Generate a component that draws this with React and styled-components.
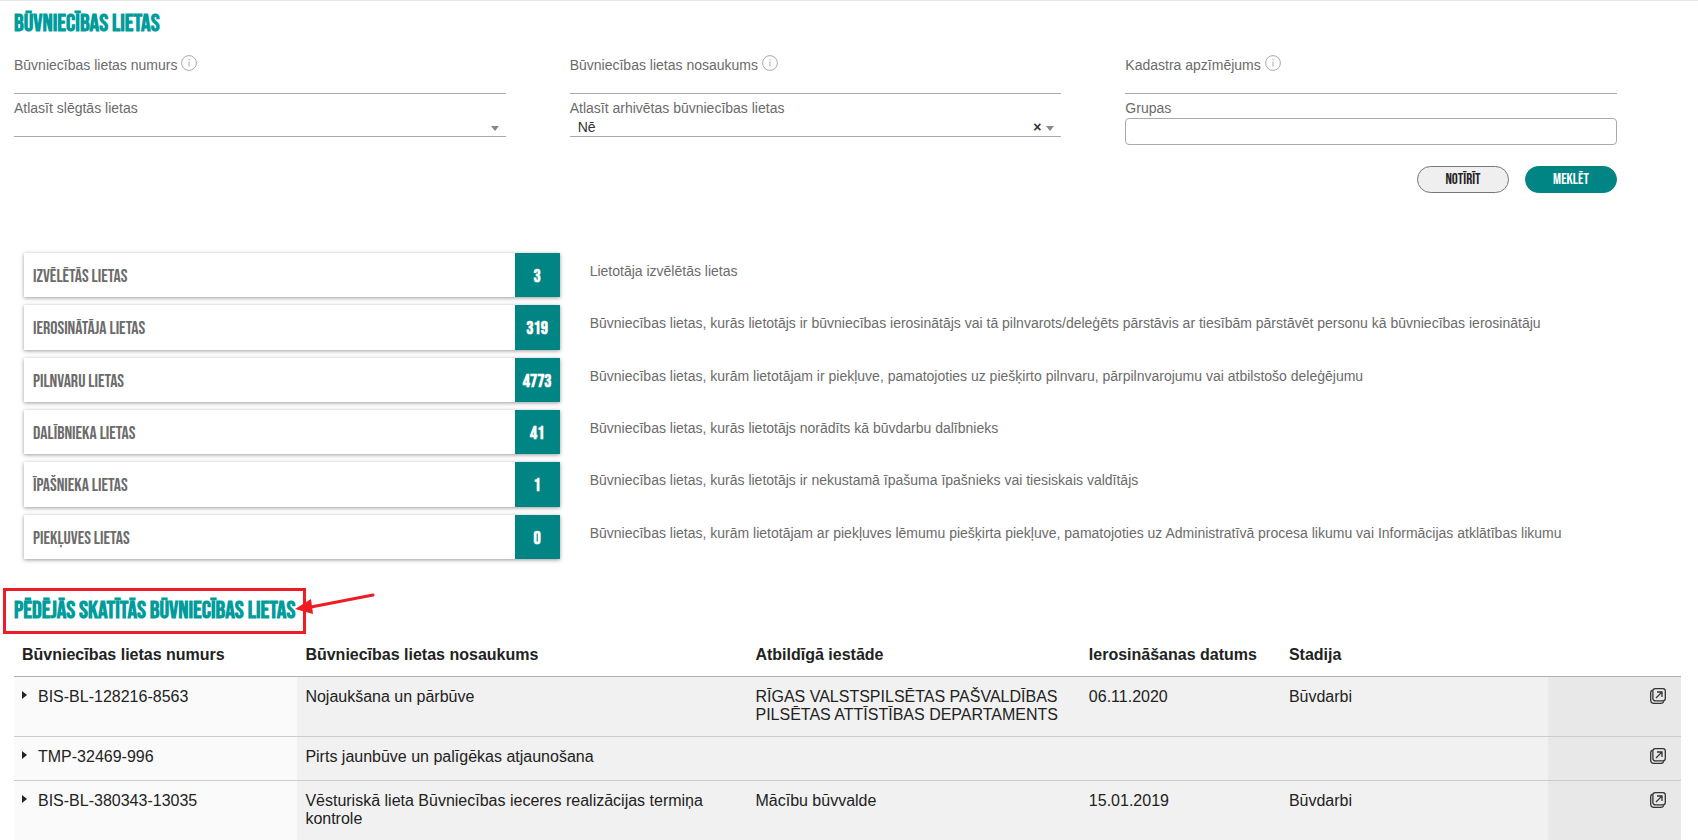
import React from "react";
import styled, { createGlobalStyle } from "styled-components";

const summary = [
  {
    title: "IZVĒLĒTĀS LIETAS",
    count: 3,
    text: "Lietotāja izvēlētās lietas"
  },
  {
    title: "IEROSINĀTĀJA LIETAS",
    count: 319,
    text:
      "Būvniecības lietas, kurās lietotājs ir būvniecības ierosinātājs vai tā pilnvarots/deleģēts pārstāvis ar tiesībām pārstāvēt personu kā būvniecības ierosinātāju"
  },
  {
    title: "PILNVARU LIETAS",
    count: 4773,
    text:
      "Būvniecības lietas, kurām lietotājam ir piekļuve, pamatojoties uz piešķirto pilnvaru, pārpilnvarojumu vai atbilstošo deleģējumu"
  },
  {
    title: "DALĪBNIEKA LIETAS",
    count: 41,
    text: "Būvniecības lietas, kurās lietotājs norādīts kā būvdarbu dalībnieks"
  },
  {
    title: "ĪPAŠNIEKA LIETAS",
    count: 1,
    text:
      "Būvniecības lietas, kurās lietotājs ir nekustamā īpašuma īpašnieks vai tiesiskais valdītājs"
  },
  {
    title: "PIEKĻUVES LIETAS",
    count: 0,
    text:
      "Būvniecības lietas, kurām lietotājam ar piekļuves lēmumu piešķirta piekļuve, pamatojoties uz Administratīvā procesa likumu vai Informācijas atklātības likumu"
  }
];

const cases = [
  {
    number: "BIS-BL-128216-8563",
    name: "Nojaukšana un pārbūve",
    office: "RĪGAS VALSTSPILSĒTAS PAŠVALDĪBAS PILSĒTAS ATTĪSTĪBAS DEPARTAMENTS",
    date: "06.11.2020",
    stage: "Būvdarbi"
  },
  {
    number: "TMP-32469-996",
    name: "Pirts jaunbūve un palīgēkas atjaunošana",
    office: "",
    date: "",
    stage: ""
  },
  {
    number: "BIS-BL-380343-13035",
    name: "Vēsturiskā lieta Būvniecības ieceres realizācijas termiņa kontrole",
    office: "Mācību būvvalde",
    date: "15.01.2019",
    stage: "Būvdarbi"
  }
];

const InfoIcon = () => (
  <InfoSvg viewBox="0 0 16 16" aria-hidden="true">
    <circle cx="8" cy="8" r="7.4" fill="none" stroke="#aaa" />
    <path d="M8 4v1.4M8 6.6v5" stroke="#aaa" />
  </InfoSvg>
);

const OpenIcon = () => (
  <svg width="16" height="16" viewBox="0 0 16 16" fill="none" stroke="#333" strokeWidth="1.3">
    <rect x="2.9" y="0.7" width="12.4" height="12.2" rx="2.4" />
    <path d="M2.6 2.2C1.2 2.6 0.7 3.4 0.7 4.6v7.8a2.9 2.9 0 0 0 2.9 2.9h7.6c1.4 0 2.2-.6 2.6-2" />
    <path d="M6 10l5.4-5.4M7 4h5v5" />
  </svg>
);

const App = () => {
  return (
    <Page>
      <GlobalStyle />
      <Title>BŪVNIECĪBAS LIETAS</Title>

      <SearchForm onSubmit={e => e.preventDefault()}>
        <Fields>
          <Field>
            <Label htmlFor="number">
              Būvniecības lietas numurs <InfoIcon />
            </Label>
            <TextInput id="number" type="text" />
          </Field>
          <Field>
            <Label htmlFor="name">
              Būvniecības lietas nosaukums <InfoIcon />
            </Label>
            <TextInput id="name" type="text" />
          </Field>
          <Field>
            <Label htmlFor="cadastre">
              Kadastra apzīmējums <InfoIcon />
            </Label>
            <TextInput id="cadastre" type="text" />
          </Field>
          <Field>
            <Label htmlFor="closed">Atlasīt slēgtās lietas</Label>
            <SelectWrapper>
              <Select id="closed" defaultValue="">
                <option value=""></option>
                <option value="yes">Jā</option>
                <option value="no">Nē</option>
              </Select>
              <SelectIcons>
                <ArrowDown />
              </SelectIcons>
            </SelectWrapper>
          </Field>
          <Field>
            <Label htmlFor="archived">Atlasīt arhivētas būvniecības lietas</Label>
            <SelectWrapper>
              <Select id="archived" defaultValue="no">
                <option value="yes">Jā</option>
                <option value="no">Nē</option>
              </Select>
              <SelectIcons>
                <ClearButton type="button">×</ClearButton>
                <ArrowDown />
              </SelectIcons>
            </SelectWrapper>
          </Field>
          <Field>
            <Label htmlFor="groups">Grupas</Label>
            <GroupInput id="groups" type="text" />
          </Field>
        </Fields>
        <Buttons>
          <Button type="reset">NOTĪRĪT</Button>
          <Button type="submit" $primary>
            MEKLĒT
          </Button>
        </Buttons>
      </SearchForm>

      <Summary>
        {summary.map(({ title, count, text }) => (
          <SummaryRow key={title}>
            <Card href="#">
              <CardTitle>{title}</CardTitle>
              <CardCount>{count}</CardCount>
            </Card>
            <CardText>{text}</CardText>
          </SummaryRow>
        ))}
      </Summary>

      <RecentTitle>
        PĒDĒJĀS SKATĪTĀS BŪVNIECĪBAS LIETAS
        <Marker />
        <Pointer viewBox="0 0 80 24" aria-hidden="true">
          <path d="M78 3L16 15" stroke="#ee1c25" strokeWidth="3" strokeLinecap="round" />
          <path d="M0 17L16 7L18 22Z" fill="#ee1c25" />
        </Pointer>
      </RecentTitle>

      <Table>
        <thead>
          <tr>
            <HeadCell $width="17%">Būvniecības lietas numurs</HeadCell>
            <HeadCell $width="27%">Būvniecības lietas nosaukums</HeadCell>
            <HeadCell $width="20%">Atbildīgā iestāde</HeadCell>
            <HeadCell $width="12%">Ierosināšanas datums</HeadCell>
            <HeadCell $width="16%">Stadija</HeadCell>
            <HeadCell $width="8%" />
          </tr>
        </thead>
        <tbody>
          {cases.map(item => (
            <tr key={item.number}>
              <Cell $background="#fafafa">
                <CaseNumber>
                  <Expand type="button" aria-label={item.number} />
                  {item.number}
                </CaseNumber>
              </Cell>
              <Cell>{item.name}</Cell>
              <Cell>{item.office}</Cell>
              <Cell>{item.date}</Cell>
              <Cell>{item.stage}</Cell>
              <Cell $background="#e8e8e8">
                <OpenLink href="#" aria-label={item.number}>
                  <OpenIcon />
                </OpenLink>
              </Cell>
            </tr>
          ))}
        </tbody>
      </Table>
    </Page>
  );
};

export default App;

const GlobalStyle = createGlobalStyle`
  * {
    box-sizing: border-box;
  }
  html {
    overflow-x: hidden;
  }
  body {
    margin: 0;
    background: #fff;
    color: #222;
    font-family: "Liberation Sans", Arial, sans-serif;
    font-size: 16px;
  }
`;

const narrowFont = `"Bebas Neue", "Roboto Condensed", "Liberation Sans", sans-serif`;

const Page = styled.main`
  padding: 8px 17px 0 14px;
  border-top: 1px solid #e6e6e6;
`;

const Title = styled.h2`
  margin: 0;
  font-family: ${narrowFont};
  font-size: 24px;
  font-weight: bold;
  line-height: 30px;
  color: #009c9c;
  white-space: nowrap;
`;

const SearchForm = styled.form`
  padding: 12px 64px 0 0;
`;

const Fields = styled.div`
  display: grid;
  grid-template-columns: repeat(3, 1fr);
  column-gap: 64px;
`;

const Field = styled.div`
  display: flex;
  flex-direction: column;
`;

const Label = styled.label`
  display: flex;
  gap: 4px;
  padding-top: 4px;
  font-size: 14px;
  line-height: 20px;
  color: #6b6b6b;
`;

const InfoSvg = styled.svg`
  width: 16px;
  height: 16px;
`;

const TextInput = styled.input`
  width: 100%;
  height: 19px;
  padding: 0 8px;
  border: 0;
  border-bottom: 1px solid #aaa;
  background: none;
  font: inherit;
  font-size: 14px;
  outline: none;
`;

const SelectWrapper = styled.div`
  position: relative;
`;

const Select = styled.select`
  display: block;
  appearance: none;
  width: 100%;
  height: 19px;
  padding: 0 32px 0 8px;
  border: 0;
  border-bottom: 1px solid #aaa;
  border-radius: 0;
  background: none;
  color: #333;
  font: inherit;
  font-size: 14px;
`;

const SelectIcons = styled.span`
  display: flex;
  align-items: center;
  gap: 5px;
  position: absolute;
  top: 0;
  right: 7px;
  height: 20px;
  pointer-events: none;
`;

const ClearButton = styled.button`
  padding: 0 0 2px;
  border: 0;
  background: none;
  color: #333;
  font: inherit;
  font-size: 14px;
  font-weight: bold;
  line-height: 14px;
  pointer-events: auto;
`;

const ArrowDown = styled.span`
  border: 4px solid transparent;
  border-top: 5px solid #888;
  border-bottom: 0;
`;

const GroupInput = styled(TextInput)`
  height: 27px;
  border: 1px solid #aaa;
  border-radius: 4px;
`;

const Buttons = styled.div`
  display: flex;
  justify-content: flex-end;
  gap: 16px;
  padding-top: 21px;
`;

const Button = styled.button`
  width: 92px;
  height: 27px;
  padding: 0;
  border: 1px solid ${({ $primary }) => ($primary ? "#008484" : "#777")};
  border-radius: 14px;
  background: ${({ $primary }) => ($primary ? "#008484" : "#efefef")};
  color: ${({ $primary }) => ($primary ? "#fff" : "#222")};
  font-family: ${narrowFont};
  font-size: 15px;

  &:hover {
    cursor: pointer;
  }
`;

const Summary = styled.section`
  padding-top: 60px;
`;

const SummaryRow = styled.div`
  display: grid;
  grid-template-columns: 1fr 2fr;
  padding-bottom: 8px;
`;

const Card = styled.a`
  display: flex;
  margin: 0 10px;
  background: #fff;
  box-shadow: 0 1px 4px rgba(0, 0, 0, 0.4);
  color: #6b6b6b;
  font-family: ${narrowFont};
  font-size: 18px;
  line-height: 1.13;
  text-decoration: none;
`;

const CardTitle = styled.span`
  flex: 1;
  padding: 14px 9px 10px;
`;

const CardCount = styled.span`
  width: 45px;
  padding: 14px 0 10px;
  background: #008484;
  color: #fff;
  font-weight: bold;
  text-align: center;
`;

const CardText = styled.p`
  margin: 0;
  padding: 8px 0 0 20px;
  font-size: 14px;
  line-height: 20px;
  color: #6b6b6b;
`;

const RecentTitle = styled(Title)`
  position: relative;
  width: fit-content;
  margin-top: 29px;
`;

const Marker = styled.span`
  position: absolute;
  inset: -8px -11px;
  border: 3px solid #ee1c25;
`;

const Pointer = styled.svg`
  position: absolute;
  left: 100%;
  top: -4px;
  width: 80px;
  height: 24px;
`;

const Table = styled.table`
  width: 100%;
  table-layout: fixed;
  border-collapse: collapse;
  margin-top: 8px;
`;

const HeadCell = styled.th`
  width: ${({ $width }) => $width};
  padding: 12px 8px;
  border-bottom: 1px solid #b0b0b0;
  line-height: 18px;
  text-align: left;
  white-space: nowrap;
`;

const Cell = styled.td`
  padding: 11px 8px 13px;
  border-bottom: 1px solid #ccc;
  background: ${({ $background }) => $background || "#f1f1f1"};
  line-height: 1.1;
  vertical-align: top;
`;

const CaseNumber = styled.div`
  display: flex;
`;

const Expand = styled.button`
  width: 16px;
  height: 14px;
  padding: 0;
  border: 0;
  background: none;

  &::before {
    content: "";
    display: block;
    width: 0;
    border: 4px solid transparent;
    border-left: 5px solid #222;
    border-right: 0;
  }
`;

const OpenLink = styled.a`
  display: flex;
  justify-content: flex-end;
  height: 19px;
  padding-right: 7px;
`;
